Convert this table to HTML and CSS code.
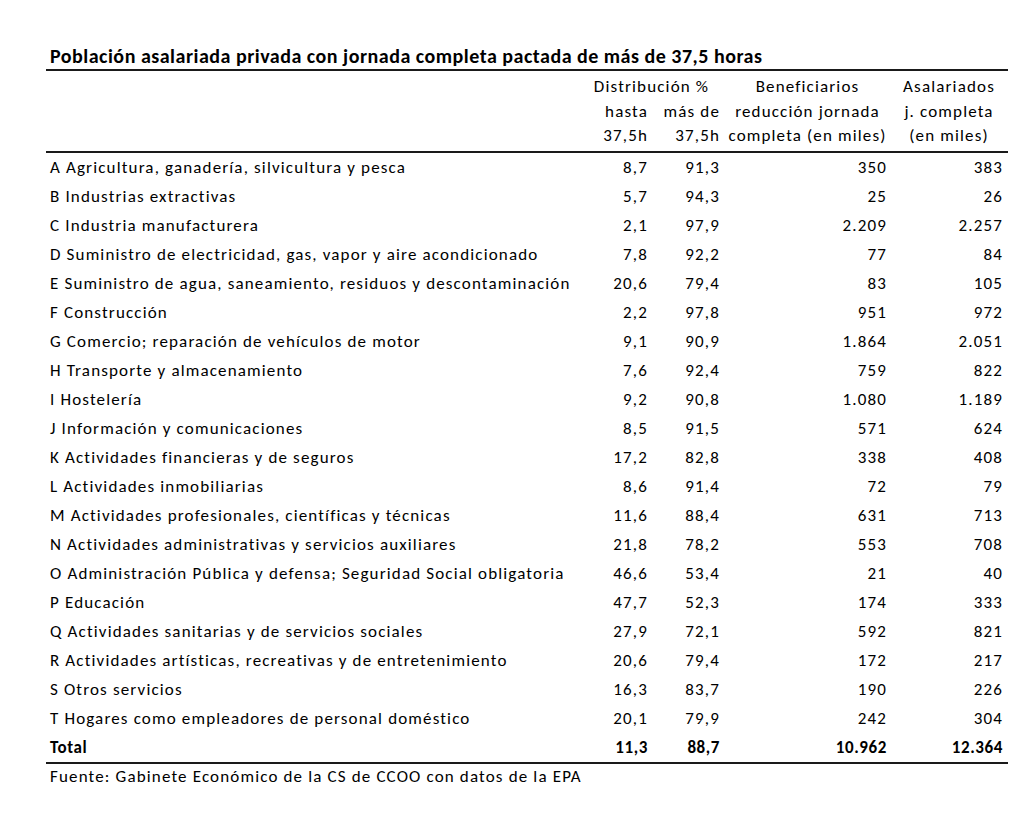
FILE: index.html
```html
<!DOCTYPE html>
<html lang="es">
<head>
<meta charset="utf-8">
<title>Población asalariada privada</title>
<link rel="stylesheet" href="styles.css">
</head>
<body>
<div class="sheet">
  <div class="title">Población asalariada privada con jornada completa pactada de más de 37,5 horas</div>
  <table class="data">
    <colgroup>
      <col class="c-label"><col class="c-hasta"><col class="c-mas"><col class="c-ben"><col class="c-asa">
    </colgroup>
    <thead>
      <tr class="h1">
        <th></th>
        <th colspan="2" class="center">Distribución %</th>
        <th class="center">Beneficiarios</th>
        <th class="center">Asalariados</th>
      </tr>
      <tr class="h2">
        <th></th>
        <th class="right">hasta</th>
        <th class="right">más de</th>
        <th class="center">reducción jornada</th>
        <th class="center">j. completa</th>
      </tr>
      <tr class="h3">
        <th></th>
        <th class="right">37,5h</th>
        <th class="right">37,5h</th>
        <th class="center">completa (en miles)</th>
        <th class="center">(en miles)</th>
      </tr>
    </thead>
    <tbody>
      <tr><td>A Agricultura, ganadería, silvicultura y pesca</td><td>8,7</td><td>91,3</td><td>350</td><td>383</td></tr>
      <tr><td>B Industrias extractivas</td><td>5,7</td><td>94,3</td><td>25</td><td>26</td></tr>
      <tr><td>C Industria manufacturera</td><td>2,1</td><td>97,9</td><td>2.209</td><td>2.257</td></tr>
      <tr><td>D Suministro de electricidad, gas, vapor y aire acondicionado</td><td>7,8</td><td>92,2</td><td>77</td><td>84</td></tr>
      <tr><td>E Suministro de agua, saneamiento, residuos y descontaminación</td><td>20,6</td><td>79,4</td><td>83</td><td>105</td></tr>
      <tr><td>F Construcción</td><td>2,2</td><td>97,8</td><td>951</td><td>972</td></tr>
      <tr><td>G Comercio; reparación de vehículos de motor</td><td>9,1</td><td>90,9</td><td>1.864</td><td>2.051</td></tr>
      <tr><td>H Transporte y almacenamiento</td><td>7,6</td><td>92,4</td><td>759</td><td>822</td></tr>
      <tr><td>I Hostelería</td><td>9,2</td><td>90,8</td><td>1.080</td><td>1.189</td></tr>
      <tr><td>J Información y comunicaciones</td><td>8,5</td><td>91,5</td><td>571</td><td>624</td></tr>
      <tr><td>K Actividades financieras y de seguros</td><td>17,2</td><td>82,8</td><td>338</td><td>408</td></tr>
      <tr><td>L Actividades inmobiliarias</td><td>8,6</td><td>91,4</td><td>72</td><td>79</td></tr>
      <tr><td>M Actividades profesionales, científicas y técnicas</td><td>11,6</td><td>88,4</td><td>631</td><td>713</td></tr>
      <tr><td>N Actividades administrativas y servicios auxiliares</td><td>21,8</td><td>78,2</td><td>553</td><td>708</td></tr>
      <tr><td>O Administración Pública y defensa; Seguridad Social obligatoria</td><td>46,6</td><td>53,4</td><td>21</td><td>40</td></tr>
      <tr><td>P Educación</td><td>47,7</td><td>52,3</td><td>174</td><td>333</td></tr>
      <tr><td>Q Actividades sanitarias y de servicios sociales</td><td>27,9</td><td>72,1</td><td>592</td><td>821</td></tr>
      <tr><td>R Actividades artísticas, recreativas y de entretenimiento</td><td>20,6</td><td>79,4</td><td>172</td><td>217</td></tr>
      <tr><td>S Otros servicios</td><td>16,3</td><td>83,7</td><td>190</td><td>226</td></tr>
      <tr><td>T Hogares como empleadores de personal doméstico</td><td>20,1</td><td>79,9</td><td>242</td><td>304</td></tr>
      <tr class="total"><td>Total</td><td>11,3</td><td>88,7</td><td>10.962</td><td>12.364</td></tr>
    </tbody>
  </table>
  <div class="source">Fuente: Gabinete Económico de la CS de CCOO con datos de la EPA</div>
</div>
</body>
</html>
```

FILE: styles.css
```css
html, body {
  margin: 0;
  padding: 0;
  background: #ffffff;
}
body {
  font-family: Carlito, Lato, "Open Sans", sans-serif;
  color: #000000;
}
.sheet {
  width: 962px;
  margin-left: 46px;
  padding-top: 44px;
}
.title {
  font-weight: bold;
  font-size: 20px;
  letter-spacing: 0.5px;
  padding: 0 0 1px 4px;
  border-bottom: 2px solid #1a1a1a;
  line-height: 24px;
  white-space: nowrap;
}
.data {
  width: 962px;
  border-collapse: collapse;
  table-layout: fixed;
  font-size: 17px;
  letter-spacing: 1.15px;
}
.c-label { width: 533px; }
.c-hasta { width: 73px; }
.c-mas { width: 72px; }
.c-ben { width: 167px; }
.c-asa { width: 117px; }
.data th {
  font-weight: normal;
  padding: 0 4px;
  white-space: nowrap;
}
.data th:last-child { padding-right: 5px; }
.data th.center { text-align: center; }
.data th.right { text-align: right; }
.data thead tr.h1 th { padding-top: 2px; height: 27px; line-height: 27px; }
.data thead tr.h2 th { height: 24px; line-height: 24px; }
.data thead tr.h3 th { height: 23px; line-height: 23px; padding-bottom: 4px; }
.data thead tr.h3 { border-bottom: 2px solid #1a1a1a; }
.data td {
  height: 29px;
  padding: 0 4px;
  text-align: right;
  white-space: nowrap;
  line-height: 29px;
}
.data td:last-child { padding-right: 5px; }
.data td:first-child { text-align: left; }
.data tr.total td { font-weight: bold; letter-spacing: 0.6px; }
.data tr.total { border-bottom: 2px solid #1a1a1a; }
.source {
  font-size: 17px;
  letter-spacing: 1.15px;
  padding: 1px 0 0 4px;
  line-height: 24px;
}
```
